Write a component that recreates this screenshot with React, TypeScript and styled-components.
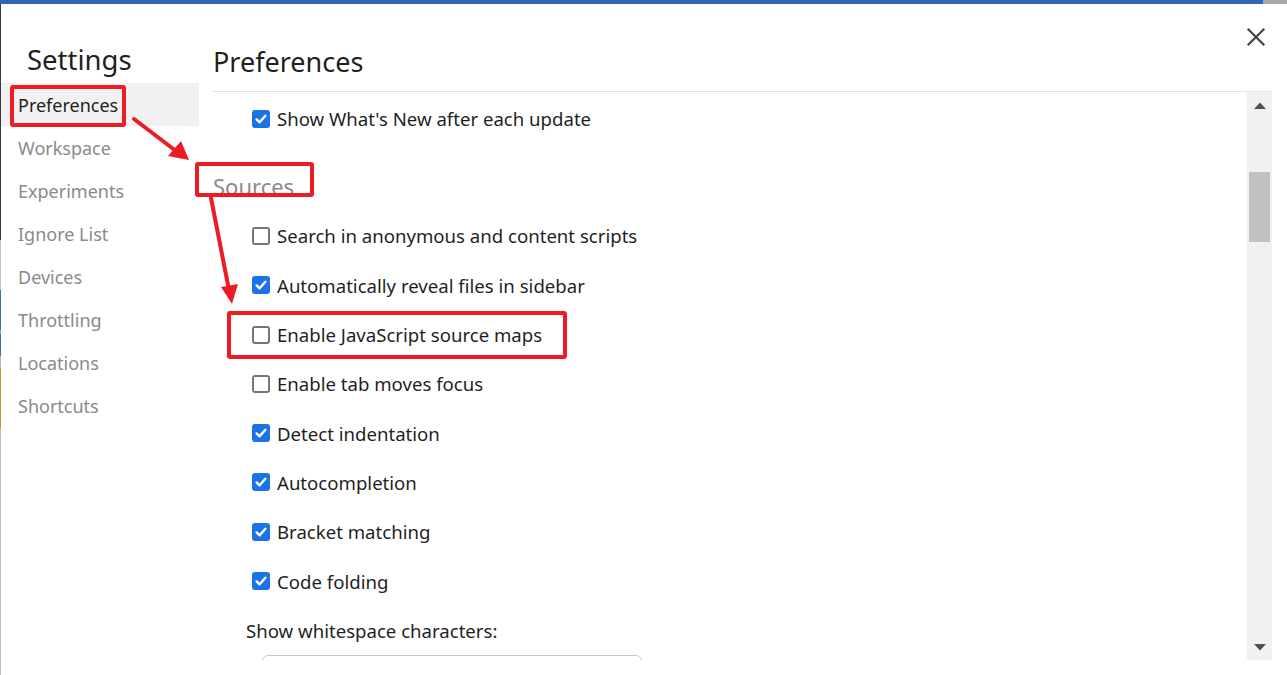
import React from "react";
import styled, { createGlobalStyle } from "styled-components";

const GlobalStyle = createGlobalStyle`
  html, body { margin: 0; padding: 0; background: #ffffff; overflow: hidden; }
  body { font-family: "Noto Sans", "Open Sans", "Liberation Sans", sans-serif; }
  * { box-sizing: border-box; }
`;

const Window = styled.div`
  position: relative;
  width: 1287px;
  height: 675px;
  background: #ffffff;
  display: flex;
  flex-direction: column;
  overflow: hidden;
`;

const TopBar = styled.div`
  height: 4px;
  display: flex;
  flex-shrink: 0;
`;

const TopBarFill = styled.div<{ $color: string; $width?: number }>`
  background: ${(p) => p.$color};
  ${(p) => (p.$width ? `width: ${p.$width}px;` : "flex: 1;")}
`;

const Body = styled.div`
  flex: 1;
  display: flex;
  min-height: 0;
`;

const EdgeStrip = styled.div`
  width: 1px;
  display: flex;
  flex-direction: column;
  flex-shrink: 0;
`;

const EdgeSegment = styled.div<{ $color: string; $h: number }>`
  height: ${(p) => p.$h}px;
  background: ${(p) => p.$color};
  flex-shrink: 0;
`;

const Sidebar = styled.nav`
  width: 198px;
  flex-shrink: 0;
  display: flex;
  flex-direction: column;
`;

const SidebarTitle = styled.h1`
  margin: 38px 0 5px 26px;
  font-size: 27.5px;
  line-height: 36px;
  font-weight: 400;
  color: #1f1f1f;
`;

const NavItem = styled.div<{ $active?: boolean }>`
  height: 43px;
  display: flex;
  align-items: center;
  padding-left: 17px;
  font-size: 18px;
  color: ${(p) => (p.$active ? "#1f1f1f" : "#8a8a8a")};
  background: ${(p) => (p.$active ? "#f1f1f1" : "transparent")};
`;

const Main = styled.main`
  flex: 1;
  margin: 0 15px 15px 13px;
  display: flex;
  flex-direction: column;
  min-width: 0;
`;

const MainHeader = styled.div`
  padding: 40px 0 11px 1px;
  border-bottom: 1px solid #dce2ee;
  flex-shrink: 0;
`;

const MainTitle = styled.h2`
  margin: 0;
  font-size: 27px;
  line-height: 36px;
  font-weight: 400;
  color: #1f1f1f;
`;

const ScrollArea = styled.div`
  flex: 1;
  display: flex;
  min-height: 0;
`;

const Content = styled.div`
  flex: 1;
  overflow: hidden;
  padding-top: 2.35px;
`;

const Row = styled.label`
  height: 49.3px;
  display: flex;
  align-items: center;
  padding-left: 40px;
  gap: 7px;
  font-size: 18.6px;
  color: #1f1f1f;
`;

const Box = styled.span<{ $checked?: boolean }>`
  width: 18px;
  height: 18px;
  border-radius: 3px;
  flex-shrink: 0;
  display: flex;
  align-items: center;
  justify-content: center;
  background: ${(p) => (p.$checked ? "#1a73e8" : "#ffffff")};
  border: ${(p) => (p.$checked ? "none" : "2px solid #767676")};
`;

const SectionTitle = styled.h3`
  margin: 0;
  padding: 30px 0 12.7px 1px;
  font-size: 22px;
  line-height: 25px;
  font-weight: 400;
  color: #8a8a8a;
`;

const FieldLabel = styled.div`
  padding: 12px 0 0 34px;
  font-size: 18.6px;
  line-height: 26px;
  color: #1f1f1f;
`;

const SelectBox = styled.div`
  margin: 11px 0 0 50px;
  width: 380px;
  height: 36px;
  border: 1px solid #c8c8c8;
  border-radius: 6px;
`;

const Scrollbar = styled.div`
  width: 25px;
  flex-shrink: 0;
  background: #f1f1f1;
  display: flex;
  flex-direction: column;
  align-items: center;
`;

const ArrowButton = styled.div`
  height: 26px;
  width: 100%;
  display: flex;
  align-items: center;
  justify-content: center;
  flex-shrink: 0;
`;

const Thumb = styled.div`
  width: 21px;
  height: 70px;
  margin-top: 54px;
  background: #c1c1c1;
`;

const Spacer = styled.div`
  flex: 1;
`;

const CloseButton = styled.div`
  position: absolute;
  top: 26px;
  right: 20px;
  width: 22px;
  height: 22px;
  display: flex;
  align-items: center;
  justify-content: center;
`;

const Annotation = styled.div<{ $l: number; $t: number; $w: number; $h: number }>`
  position: absolute;
  left: ${(p) => p.$l}px;
  top: ${(p) => p.$t}px;
  width: ${(p) => p.$w}px;
  height: ${(p) => p.$h}px;
  border: 4px solid #ec1c24;
  border-radius: 3px;
  pointer-events: none;
`;

const ArrowLayer = styled.svg`
  position: absolute;
  left: 0;
  top: 0;
  pointer-events: none;
`;

const Check = ({ checked }: { checked?: boolean }) => (
  <Box $checked={checked}>
    {checked && (
      <svg width="14" height="14" viewBox="0 0 14 14">
        <path d="M2.6 7.4 L5.6 10.3 L11.4 3.8" fill="none" stroke="#fff" strokeWidth="2.4" strokeLinecap="round" strokeLinejoin="round" />
      </svg>
    )}
  </Box>
);

const nav = ["Preferences", "Workspace", "Experiments", "Ignore List", "Devices", "Throttling", "Locations", "Shortcuts"];

const sources: [string, boolean][] = [
  ["Search in anonymous and content scripts", false],
  ["Automatically reveal files in sidebar", true],
  ["Enable JavaScript source maps", false],
  ["Enable tab moves focus", false],
  ["Detect indentation", true],
  ["Autocompletion", true],
  ["Bracket matching", true],
  ["Code folding", true],
];

const edge: [string, number][] = [
  ["#3a3a3a", 236],
  ["#c4c4c4", 50],
  ["#2e75b6", 40],
  ["#9a9a9a", 4],
  ["#2e75b6", 22],
  ["#b8b8b8", 12],
  ["#c8962e", 60],
  ["#bdbdbd", 260],
];

export default function App() {
  return (
    <>
      <GlobalStyle />
      <Window>
        <TopBar>
          <TopBarFill $color="#2f66b3" />
          <TopBarFill $color="#a8a8a8" $width={24} />
        </TopBar>
        <Body>
          <EdgeStrip>
            {edge.map(([c, h], i) => (
              <EdgeSegment key={i} $color={c} $h={h} />
            ))}
          </EdgeStrip>
          <Sidebar>
            <SidebarTitle>Settings</SidebarTitle>
            {nav.map((n, i) => (
              <NavItem key={n} $active={i === 0}>
                {n}
              </NavItem>
            ))}
          </Sidebar>
          <Main>
            <MainHeader>
              <MainTitle>Preferences</MainTitle>
            </MainHeader>
            <ScrollArea>
              <Content>
                <Row>
                  <Check checked />
                  Show What's New after each update
                </Row>
                <SectionTitle>Sources</SectionTitle>
                {sources.map(([t, c]) => (
                  <Row key={t}>
                    <Check checked={c} />
                    {t}
                  </Row>
                ))}
                <FieldLabel>Show whitespace characters:</FieldLabel>
                <SelectBox />
              </Content>
              <Scrollbar>
                <ArrowButton>
                  <svg width="12" height="7" viewBox="0 0 12 7">
                    <path d="M0 7 L6 0.5 L12 7 Z" fill="#505050" />
                  </svg>
                </ArrowButton>
                <Thumb />
                <Spacer />
                <ArrowButton>
                  <svg width="12" height="7" viewBox="0 0 12 7">
                    <path d="M0 0 L6 6.5 L12 0 Z" fill="#505050" />
                  </svg>
                </ArrowButton>
              </Scrollbar>
            </ScrollArea>
          </Main>
        </Body>
        <CloseButton>
          <svg width="20" height="20" viewBox="0 0 20 20">
            <path d="M2.5 2.5 L17.5 17.5 M17.5 2.5 L2.5 17.5" stroke="#444" strokeWidth="2.2" strokeLinecap="square" />
          </svg>
        </CloseButton>
        <Annotation $l={10} $t={85} $w={116} $h={42} />
        <Annotation $l={195} $t={162} $w={119} $h={35} />
        <Annotation $l={227} $t={311} $w={340} $h={48} />
        <ArrowLayer width="1287" height="675" viewBox="0 0 1287 675">
          <line x1="134" y1="119" x2="176" y2="151" stroke="#ec1c24" strokeWidth="4" strokeLinecap="round" />
          <polygon points="168,156 181,141 189,160" fill="#ec1c24" />
          <line x1="211" y1="198" x2="229" y2="290" stroke="#ec1c24" strokeWidth="4" strokeLinecap="round" />
          <polygon points="221,287 238,284 232,304" fill="#ec1c24" />
        </ArrowLayer>
      </Window>
    </>
  );
}
